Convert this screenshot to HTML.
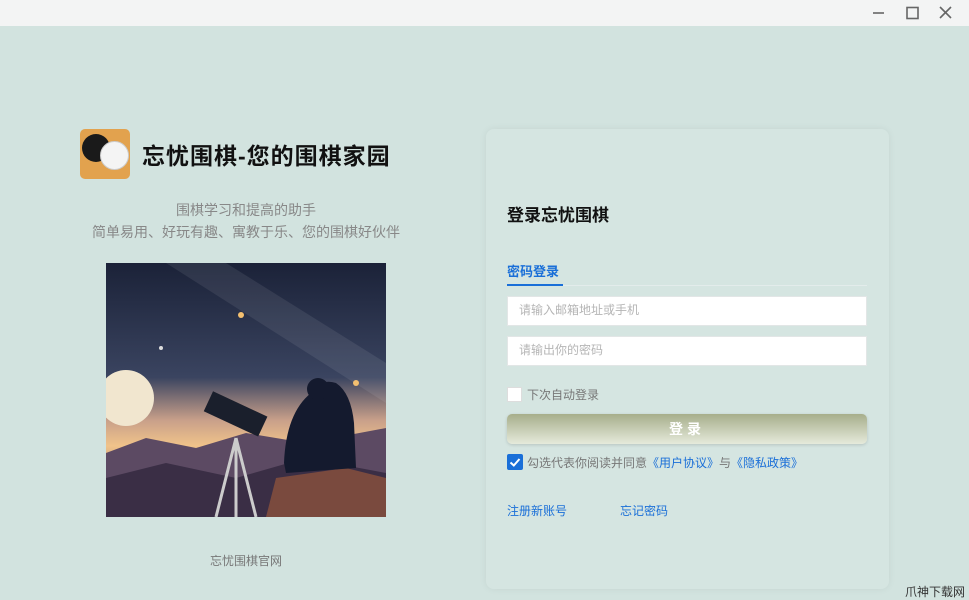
<!DOCTYPE html>
<html><head><meta charset="utf-8"><style>
*{margin:0;padding:0;box-sizing:border-box}
body{width:969px;height:600px;overflow:hidden;background:#d2e3df;font-family:"Liberation Sans","Noto Sans CJK SC",sans-serif;position:relative}
.top{position:absolute;left:0;top:0;width:969px;height:26px;background:#f3f4f4}
.abs{position:absolute}
.card{left:486px;top:129px;width:403px;height:460px;background:#d5e5e1;border-radius:8px;box-shadow:0 0 8px rgba(0,0,0,.06)}
.inp{position:absolute;left:507px;width:360px;height:30px;background:#fff;border:1px solid #e2e6e6;font-size:12px;color:#b5b5b5;padding:6px 11px;line-height:14px}
</style></head><body>
<div class="top"></div>
<svg class="abs" style="left:870px;top:4px" width="90" height="18"><g stroke="#666" stroke-width="1.6" fill="none"><line x1="3" y1="9" x2="14" y2="9"/><rect x="37" y="3.5" width="11" height="11"/><line x1="70" y1="3" x2="81" y2="14"/><line x1="81" y1="3" x2="70" y2="14"/></g></svg>

<div class="abs" style="left:80px;top:129px;width:50px;height:50px;border-radius:5px;background:#e2a24e"></div>
<div class="abs" style="left:82px;top:134px;width:28px;height:28px;border-radius:50%;background:#1a1a1a"></div>
<div class="abs" style="left:100px;top:141px;width:29px;height:29px;border-radius:50%;background:#f4f4f4;border:1px solid #ccc"></div>
<div class="abs" style="left:142px;top:137px;font-size:23px;font-weight:bold;color:#111;letter-spacing:1px">忘忧围棋-您的围棋家园</div>
<div class="abs" style="left:80px;top:199px;width:332px;text-align:center;font-size:14px;color:#888;line-height:22px">围棋学习和提高的助手<br>简单易用、好玩有趣、寓教于乐、您的围棋好伙伴</div>

<svg class="abs" style="left:106px;top:263px" width="280" height="254">
<defs><linearGradient id="s" x1="0" y1="0" x2="0" y2="1"><stop offset="0" stop-color="#1b2238"/><stop offset=".45" stop-color="#3a4460"/><stop offset=".62" stop-color="#c9a08a"/><stop offset=".72" stop-color="#f0c38a"/><stop offset="1" stop-color="#6b4a55"/></linearGradient></defs>
<rect width="280" height="254" fill="url(#s)"/>
<path d="M60 0 L280 140 L280 100 L120 0Z" fill="#fff" opacity=".08"/>
<circle cx="20" cy="135" r="28" fill="#f1e6cf"/>
<path d="M0 190 L40 175 L90 185 L140 170 L200 180 L280 165 L280 254 L0 254Z" fill="#5c4a63"/>
<path d="M0 215 L60 200 L130 215 L200 195 L280 210 L280 254 L0 254Z" fill="#3a2e45"/>
<path d="M160 254 L170 215 L240 205 L280 215 L280 254Z" fill="#7a4a3e"/>
<path d="M178 200 Q180 150 205 130 Q215 115 230 120 Q245 130 248 160 L250 205 L180 210Z" fill="#141a2e"/>
<circle cx="212" cy="126" r="11" fill="#141a2e"/>
<rect x="100" y="140" width="60" height="22" fill="#1a1f2c" transform="rotate(25 130 150)"/>
<path d="M130 175 L110 254 M130 175 L150 254 M130 175 L130 254" stroke="#ccc" stroke-width="3"/>
<circle cx="135" cy="52" r="3" fill="#f4c070"/><circle cx="250" cy="120" r="3" fill="#f4c070"/><circle cx="55" cy="85" r="2" fill="#ddd"/>
</svg>
<div class="abs" style="left:80px;top:552px;width:332px;text-align:center;font-size:12px;color:#777">忘忧围棋官网</div>

<div class="abs card"></div>
<div class="abs" style="left:507px;top:201px;font-size:17px;font-weight:bold;color:#111">登录忘忧围棋</div>
<div class="abs" style="left:507px;top:261px;font-size:13px;font-weight:bold;color:#1a6fd8">密码登录</div>
<div class="abs" style="left:507px;top:285px;width:360px;height:1px;background:#e3eceb"></div>
<div class="abs" style="left:507px;top:284px;width:56px;height:2px;background:#1a6fd8"></div>
<div class="inp" style="top:296px">请输入邮箱地址或手机</div>
<div class="inp" style="top:336px">请输出你的密码</div>
<div class="abs" style="left:507px;top:387px;width:15px;height:15px;background:#fff;border:1px solid #ddd"></div>
<div class="abs" style="left:527px;top:386px;font-size:12px;color:#777">下次自动登录</div>
<div class="abs" style="left:507px;top:414px;width:360px;height:30px;border-radius:5px;background:linear-gradient(#a7ae8b,#e5eadb);box-shadow:0 1px 3px rgba(0,0,0,.15);text-align:center;color:#fff;font-size:14px;font-weight:bold;line-height:30px;letter-spacing:4px">登录</div>
<div class="abs" style="left:507px;top:454px;width:16px;height:16px;background:#1a6fd8;border-radius:2px"><svg width="16" height="16"><path d="M3.5 8.5 L6.8 11.5 L12.5 5" stroke="#fff" stroke-width="2" fill="none"/></svg></div>
<div class="abs" style="left:527px;top:454px;font-size:12px;color:#777">勾选代表你阅读并同意<span style="color:#1a6fd8">《用户协议》</span>与<span style="color:#1a6fd8">《隐私政策》</span></div>
<div class="abs" style="left:507px;top:502px;font-size:12px;color:#1a6fd8">注册新账号</div>
<div class="abs" style="left:620px;top:502px;font-size:12px;color:#1a6fd8">忘记密码</div>
<div class="abs" style="left:905px;top:583px;font-size:12px;color:#333">爪神下载网</div>
</body></html>
